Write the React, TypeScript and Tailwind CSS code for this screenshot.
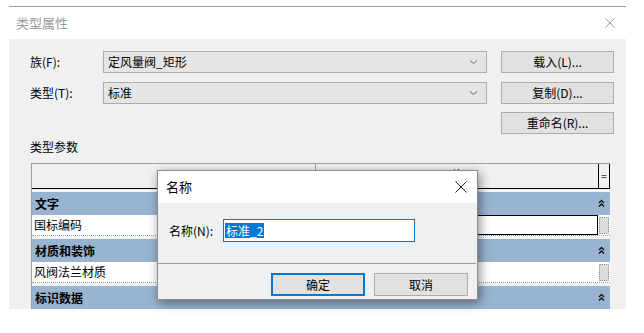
import React from 'react';

const font = { fontFamily: '"Noto Sans CJK SC", "Liberation Sans", sans-serif' };

function Chevron() {
  return (
    <svg width="9" height="6" viewBox="0 0 9 6" className="text-[#606060]">
      <path d="M1 1.5 L4.5 4.5 L8 1.5" fill="none" stroke="currentColor" strokeWidth="1" />
    </svg>
  );
}

function CloseX({ size, color }: { size: number; color: string }) {
  return (
    <svg width={size} height={size} viewBox="0 0 12 12">
      <path d="M0.5 0.5 L11.5 11.5 M11.5 0.5 L0.5 11.5" stroke={color} strokeWidth="1" fill="none" />
    </svg>
  );
}

function Collapse() {
  return (
    <svg width="7" height="9" viewBox="0 0 7 9">
      <path d="M1 4 L3.5 1.5 L6 4 M1 7.5 L3.5 5 L6 7.5" fill="none" stroke="#111" strokeWidth="1.3" />
    </svg>
  );
}

function Combo({ value }: { value: string }) {
  return (
    <div className="w-[384px] h-[22px] bg-[#e5e5e5] border border-[#adadad] flex items-center justify-between pl-[4px] pr-[8px] text-[12px] text-black">
      <span>{value}</span>
      <Chevron />
    </div>
  );
}

function Btn({ label }: { label: string }) {
  return (
    <div className="w-[113px] h-[22px] bg-[#e1e1e1] border border-[#adadad] flex items-center justify-center text-[12px] text-black">
      {label}
    </div>
  );
}

function GroupRow({ title }: { title: string }) {
  return (
    <div className="mt-[3px] h-[23px] bg-[#99b4d1] flex items-center justify-between pl-[3px] pr-[5px]">
      <span className="text-[12px] font-bold text-black">{title}</span>
      <Collapse />
    </div>
  );
}

function ParamRow({ name, selected }: { name: string; selected?: boolean }) {
  return (
    <div className="h-[21px] bg-white grid grid-cols-[283px_283px_1fr] border-b border-dotted border-[#9a9a9a]">
      <div className="flex items-center pl-[2px] text-[12px] text-black">{name}</div>
      <div className={selected ? 'border border-black' : ''} />
      <div className="flex items-center justify-center">
        <div className="w-[10px] h-[17px] bg-[#dcdcdc] border border-dotted border-[#8a8a8a] rounded-[1px]" />
      </div>
    </div>
  );
}

export default function App() {
  return (
    <div className="w-[644px] h-[333px] bg-white relative overflow-hidden" style={font}>
      <div className="ml-[9px] mt-[6px] w-[617px] border-t border-[#a0a0a0]">
        {/* title bar */}
        <div className="h-[32px] bg-white flex items-center justify-between pl-[7px] pr-[11px]">
          <span className="text-[13px] text-[#9a9a9a]">类型属性</span>
          <CloseX size={10} color="#8a8a8a" />
        </div>

        {/* body */}
        <div className="h-[270px] bg-[#f0f0f0] pl-[21px] pt-[12px] overflow-hidden">
          <div className="flex items-center h-[22px]">
            <span className="w-[73px] text-[12px] text-black">族(F):</span>
            <Combo value="定风量阀_矩形" />
            <div className="ml-[14px]">
              <Btn label="载入(L)..." />
            </div>
          </div>
          <div className="flex items-center h-[22px] mt-[9px]">
            <span className="w-[73px] text-[12px] text-black">类型(T):</span>
            <Combo value="标准" />
            <div className="ml-[14px]">
              <Btn label="复制(D)..." />
            </div>
          </div>
          <div className="h-[22px] mt-[8px] ml-[471px]">
            <Btn label="重命名(R)..." />
          </div>
          <div className="mt-[5px] h-[16px] leading-[16px] text-[12px] text-black">类型参数</div>

          {/* table */}
          <div className="mt-[8px] ml-[1px] w-[579px] border-t border-l border-[#a0a0a0] bg-[#f4f4f4]">
            <div className="h-[25px] grid grid-cols-[283px_283px_1fr] bg-[#f0f0f0] border-b border-black">
              <div />
              <div className="flex items-start justify-center pt-[2px] text-[12px] text-black border-l border-[#a0a0a0]">值</div>
              <div className="flex items-center justify-center border-x border-black text-[10px] leading-none text-[#333]">=</div>
            </div>
            <GroupRow title="文字" />
            <ParamRow name="国标编码" selected />
            <GroupRow title="材质和装饰" />
            <ParamRow name="风阀法兰材质" />
            <GroupRow title="标识数据" />
          </div>
        </div>
      </div>

      {/* name dialog */}
      <div className="absolute left-[157px] top-[170px] w-[321px] h-[130px] bg-[#f0f0f0] border border-[#8c8c8c] shadow-[2px_3px_10px_rgba(0,0,0,0.45)] flex flex-col">
        <div className="h-[32px] bg-white flex items-center justify-between pl-[8px] pr-[10px]">
          <span className="text-[13px] text-black">名称</span>
          <CloseX size={12} color="#222" />
        </div>
        <div className="flex items-center pl-[11px] mt-[16px] h-[23px]">
          <span className="w-[54px] text-[12px] text-black">名称(N):</span>
          <div className="w-[192px] h-[23px] bg-white border border-[#0078d7] flex items-center pl-[1px]">
            <span className="bg-[#0078d7] text-white text-[12px] leading-[15px] px-[1px]">标准_2</span>
          </div>
        </div>
        <div className="mt-[21px] border-t border-[#a0a0a0] mr-[1px]" />
        <div className="flex justify-end gap-[9px] pr-[9px] mt-[9px]">
          <div className="w-[94px] h-[23px] bg-[#e1e1e1] border-2 border-[#0078d7] flex items-center justify-center text-[12px] text-black">确定</div>
          <div className="w-[94px] h-[23px] bg-[#e1e1e1] border border-[#adadad] flex items-center justify-center text-[12px] text-black">取消</div>
        </div>
      </div>
    </div>
  );
}
